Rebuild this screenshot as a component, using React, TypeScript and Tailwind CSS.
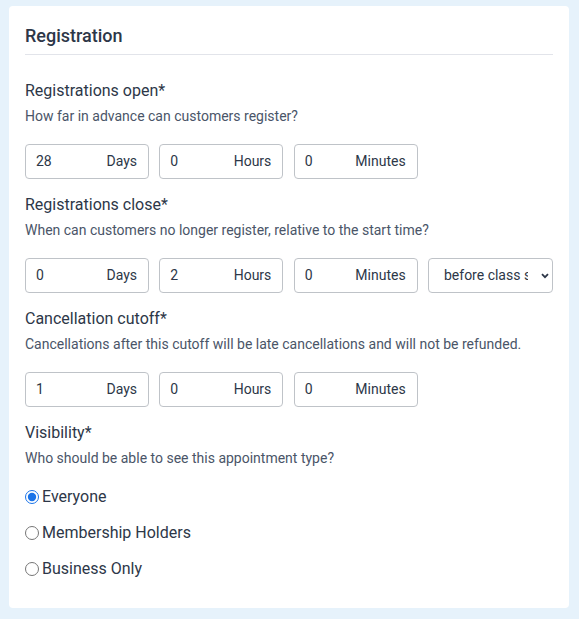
import { useState } from 'react'

type Unit = { value: string; unit: string }

const opens: Unit[] = [
  { value: '28', unit: 'Days' },
  { value: '0', unit: 'Hours' },
  { value: '0', unit: 'Minutes' },
]

const closes: Unit[] = [
  { value: '0', unit: 'Days' },
  { value: '2', unit: 'Hours' },
  { value: '0', unit: 'Minutes' },
]

const cutoff: Unit[] = [
  { value: '1', unit: 'Days' },
  { value: '0', unit: 'Hours' },
  { value: '0', unit: 'Minutes' },
]

function DurationInput({ value, unit }: Unit) {
  return (
    <div className="flex h-[35px] w-[124px] items-center rounded-[4px] border border-[#bfc3c8] bg-white pl-[10px] pr-[11px] text-[14px] text-[#2d3748]">
      <input
        defaultValue={value}
        className="w-0 min-w-0 flex-1 bg-transparent outline-none"
      />
      <span>{unit}</span>
    </div>
  )
}

function Field({ label, hint, children }: { label: string; hint: string; children: React.ReactNode }) {
  return (
    <div>
      <div className="text-[16px] leading-[24px] text-[#2d3748]">{label}</div>
      <div className="mt-[3px] text-[14px] leading-[20px] text-[#4a5568]">{hint}</div>
      {children}
    </div>
  )
}

export default function App() {
  const [visibility, setVisibility] = useState('everyone')
  const options = [
    { id: 'everyone', label: 'Everyone' },
    { id: 'members', label: 'Membership Holders' },
    { id: 'business', label: 'Business Only' },
  ]

  return (
    <div className="min-h-[619px] bg-[#e6f2fb] pl-[9px] pr-[10px] pt-[6px] font-['Roboto',sans-serif]">
      <div className="h-[602px] rounded-[4px] bg-white px-[16px]">
        <h2 className="border-b border-[#e2e4ea] pb-[6px] pt-[18px] text-[18px] font-medium leading-[24px] text-[#2d3748]">
          Registration
        </h2>

        <div className="mt-[24px] flex flex-col gap-[14px]">
          <Field label="Registrations open*" hint="How far in advance can customers register?">
            <div className="mt-[18px] flex gap-[10.33px]">
              {opens.map((u) => (
                <DurationInput key={u.unit} {...u} />
              ))}
            </div>
          </Field>

          <Field
            label="Registrations close*"
            hint="When can customers no longer register, relative to the start time?"
          >
            <div className="mt-[18px] flex gap-[10.33px]">
              {closes.map((u) => (
                <DurationInput key={u.unit} {...u} />
              ))}
              <div className="relative">
                <select className="h-[35px] w-[125px] appearance-none rounded-[4px] border border-[#bfc3c8] bg-white pl-[15px] pr-[24px] text-[14px] text-[#2d3748] outline-none">
                  <option>before class starts</option>
                  <option>after class starts</option>
                </select>
                <svg
                  className="pointer-events-none absolute right-[4px] top-[15px] h-[6px] w-[8px]"
                  viewBox="0 0 8 6"
                  fill="none"
                  stroke="#2d3748"
                  strokeWidth="1.8"
                >
                  <path d="M1 1.2l3 3 3-3" />
                </svg>
              </div>
            </div>
          </Field>

          <Field
            label="Cancellation cutoff*"
            hint="Cancellations after this cutoff will be late cancellations and will not be refunded."
          >
            <div className="mt-[18px] flex gap-[10.33px]">
              {cutoff.map((u) => (
                <DurationInput key={u.unit} {...u} />
              ))}
            </div>
          </Field>

          <Field label="Visibility*" hint="Who should be able to see this appointment type?">
            <div className="mt-[11px] flex flex-col">
              {options.map((o) => (
                <label
                  key={o.id}
                  className="flex h-[36px] items-center gap-[3px] text-[16px] text-[#2d3748]"
                >
                  <input
                    type="radio"
                    name="visibility"
                    checked={visibility === o.id}
                    onChange={() => setVisibility(o.id)}
                    className="m-0 h-[14px] w-[14px] accent-[#1a73e8]"
                  />
                  {o.label}
                </label>
              ))}
            </div>
          </Field>
        </div>
      </div>
    </div>
  )
}
